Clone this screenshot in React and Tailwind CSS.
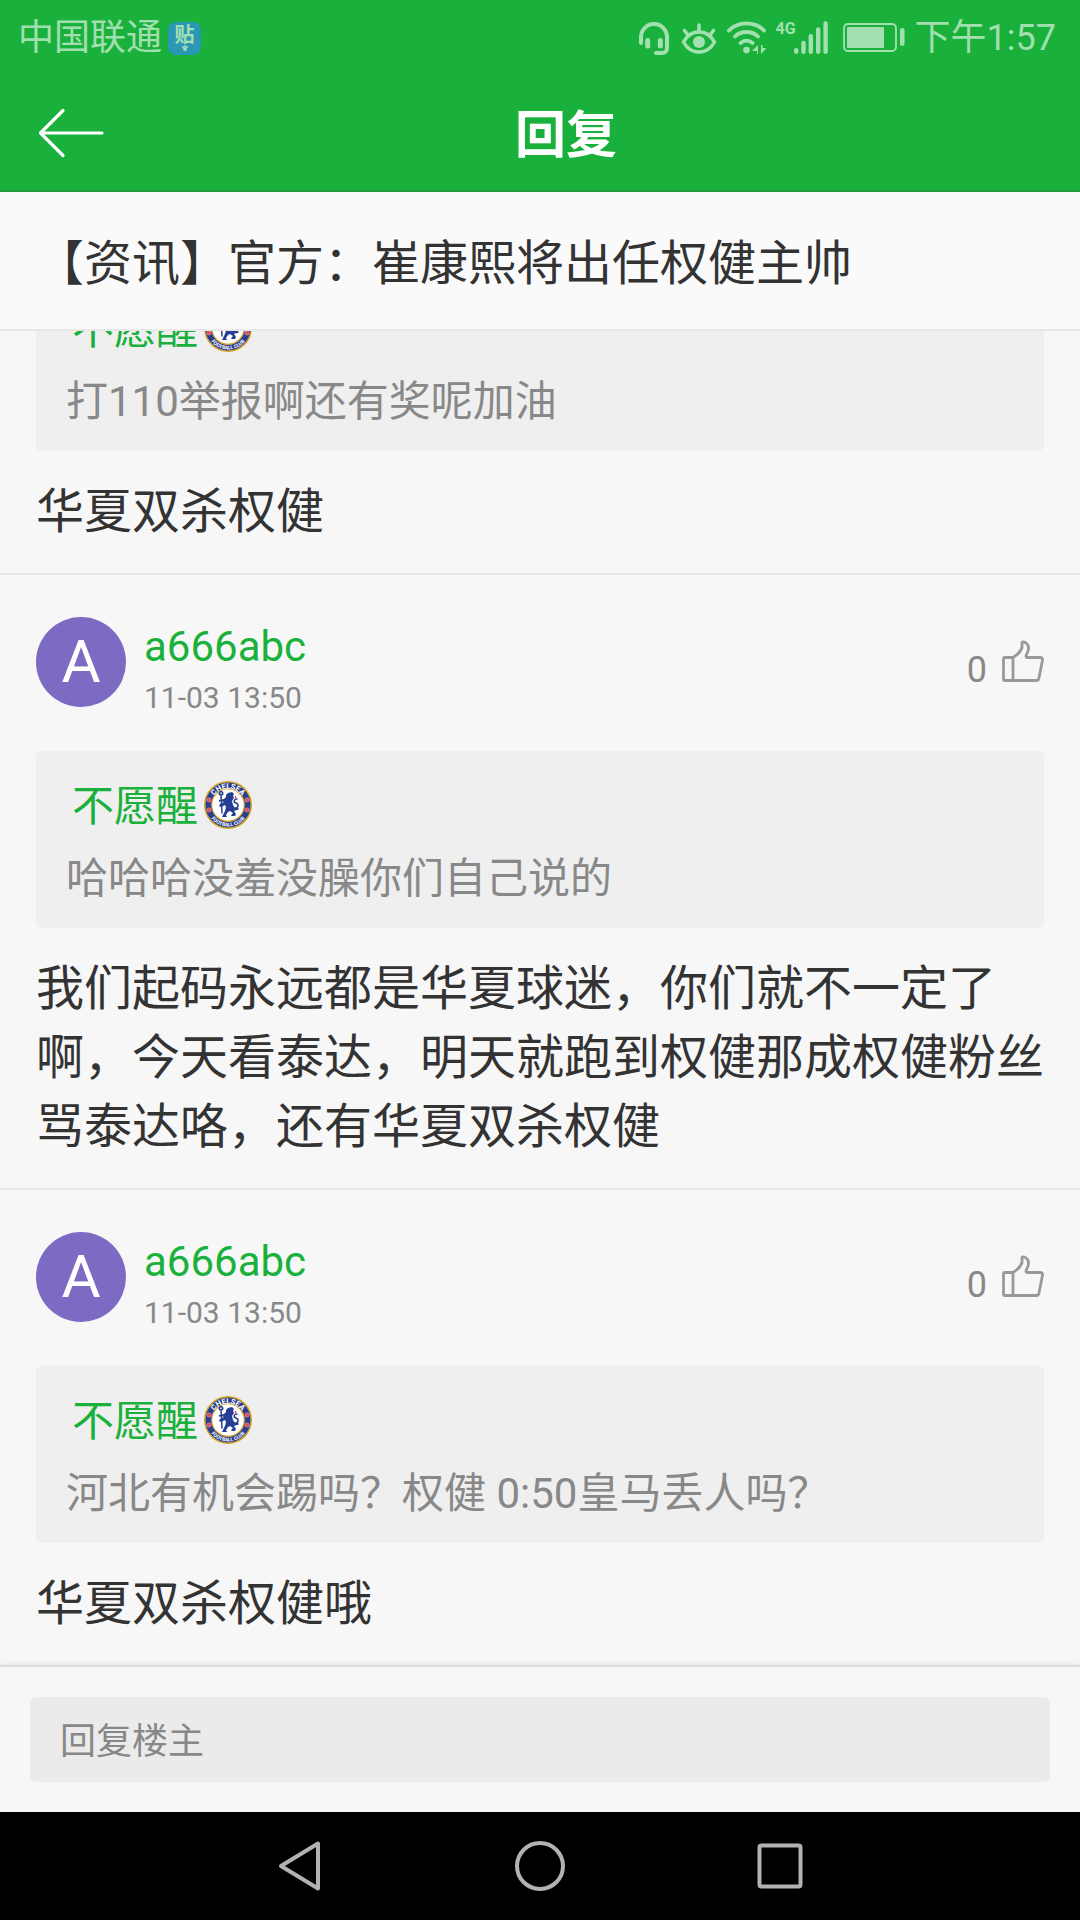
import React, { useState } from "react";

const comments = [
  {
    id: 1,
    user: "a666abc",
    time: "11-03 13:50",
    likes: 0,
    quoteUser: "不愿醒",
    quote: "打110举报啊还有奖呢加油",
    text: "华夏双杀权健",
  },
  {
    id: 2,
    user: "a666abc",
    time: "11-03 13:50",
    likes: 0,
    quoteUser: "不愿醒",
    quote: "哈哈哈没羞没臊你们自己说的",
    text: "我们起码永远都是华夏球迷，你们就不一定了啊，今天看泰达，明天就跑到权健那成权健粉丝骂泰达咯，还有华夏双杀权健",
  },
  {
    id: 3,
    user: "a666abc",
    time: "11-03 13:50",
    likes: 0,
    quoteUser: "不愿醒",
    quote: "河北有机会踢吗？权健 0:50皇马丢人吗？",
    text: "华夏双杀权健哦",
  },
];

function StatusBar() {
  return (
    <div className="flex h-[72px] items-center justify-between pl-[18px] pr-6 pt-1 text-4xl leading-[36px] text-white/60">
      <div className="flex items-center gap-[6px]">
        <span>中国联通</span>
        <span className="flex h-[33px] w-[33px] flex-col items-center rounded-lg bg-[#2a98b5] pt-[3px] text-xl font-bold leading-[20px] text-[#a3e0b1]">
          贴
          <svg width="6" height="6" viewBox="0 0 6 6" fill="currentColor">
            <circle cx="1" cy="2" r="1" />
            <circle cx="3" cy="1" r="1" />
            <circle cx="5" cy="2" r="1" />
            <circle cx="3" cy="4" r="2" />
          </svg>
        </span>
      </div>
      <div className="flex items-center">
        {/* headset */}
        <svg className="mr-3" width="30" height="33" viewBox="0 0 30 33" fill="none" stroke="currentColor" strokeLinecap="round">
          <path d="M2 21V15a13 13 0 0 1 26 0v11a5 5 0 0 1-5 5h-6" strokeWidth="4" />
          <path d="M8.7 18.5v5.5M21.3 18.5v5.5" strokeWidth="5" />
        </svg>
        {/* eye */}
        <svg className="mr-[10px]" width="36" height="33" viewBox="0 0 36 33" fill="none" stroke="currentColor" strokeLinecap="round">
          <path d="M2.500 20C10 6.500 26 6.500 33.500 20C26 33.500 10 33.500 2.500 20ZM18 3v6.500M3.500 8.500l3.500 4.500M32.500 8.500l-3.500 4.500" strokeWidth="3.600" />
          <circle cx="18" cy="20" r="6" fill="currentColor" stroke="none" />
        </svg>
        {/* wifi */}
        <svg className="mr-2" width="40" height="34" viewBox="0 0 40 34" fill="none" stroke="currentColor" strokeLinecap="round">
          <path d="M2 9.500C11 0 28 0 37 9.500M8 15.500c6-6 17-6 23 0M13.500 22c3.500-3 8.500-3 12 0" strokeWidth="3.800" />
          <circle cx="19.500" cy="29" r="3.300" fill="currentColor" stroke="none" />
          <path d="M31 24v9h-1v-3h-5zM34 24v9l5.500-6h-4v-3z" fill="currentColor" stroke="none" />
        </svg>
        <span className="-mr-0.5 h-[36px] text-base font-bold leading-[18px]">4G</span>
        {/* signal */}
        <svg className="mr-[15px]" width="34" height="34" viewBox="0 0 34 34" fill="none" stroke="currentColor" strokeWidth="4.400" strokeLinecap="round">
          <path d="M2.200 29.200v1.600M9.500 22v8.800M16.800 15.200v15.600M24.200 8.500v22.300M31.600 2.500v28.300" />
        </svg>
        {/* battery */}
        <svg className="mr-[10px]" width="62" height="30" viewBox="0 0 62 30">
          <rect x="1" y="1" width="52" height="27" rx="4" fill="none" stroke="currentColor" strokeWidth="1.800" />
          <rect x="4" y="4" width="37" height="21" rx="1" fill="currentColor" />
          <rect x="57" y="5" width="4.500" height="18" rx="2.200" fill="currentColor" />
        </svg>
        <span>下午1:57</span>
      </div>
    </div>
  );
}

function ClubBadge() {
  return (
    <svg width="48" height="48" viewBox="0 0 48 48" aria-label="Chelsea Football Club">
      <defs>
        <path id="badgeTop" d="M7.500 24a16.500 16.500 0 0 1 33 0" />
        <path id="badgeBottom" d="M2.500 24a21.500 21.500 0 0 0 43 0" />
      </defs>
      <circle cx="24" cy="24" r="23.200" fill="#263e94" stroke="#d5a42b" strokeWidth="1.500" />
      <circle cx="24" cy="24" r="16.300" fill="#fff" stroke="#d5a42b" strokeWidth="1.200" />
      <text fill="#fff" fontSize="7.500" fontWeight="700" textAnchor="middle">
        <textPath href="#badgeTop" startOffset="50%">CHELSEA</textPath>
      </text>
      <text fill="#fff" fontSize="5" fontWeight="700" textAnchor="middle">
        <textPath href="#badgeBottom" startOffset="50%">FOOTBALL CLUB</textPath>
      </text>
      <g fill="#ee4557" stroke="#f4a3a9" strokeWidth="0.600">
        <circle cx="5" cy="19" r="2.100" />
        <circle cx="5" cy="29" r="2.100" />
        <circle cx="43" cy="19" r="2.100" />
        <circle cx="43" cy="29" r="2.100" />
      </g>
      {/* lion with staff */}
      <path
        fill="#263e94"
        d="M22 14l2-2 4-1 2 2-1 2 1 2-2 3 1 4 2 3-1 3 2 3-1 2h-4l1-2 1-1-3-2-2 1-2 3 1 2h-5l1-2 2-4 1-4-1-2-4 2-2-1 1-2 4-2-3-1-2 1v-2l5-1 2-2z"
      />
      <path
        fill="none"
        stroke="#263e94"
        strokeWidth="1.500"
        strokeLinecap="round"
        d="M17 14l1 18M15.500 13.500a1.800 1.800 0 1 1 3 0zM30 27c5 1 5-4 2-5s-2-4 1-4M30 29l4-1"
      />
      <circle cx="31.500" cy="16" r="0.900" fill="#e5333f" />
    </svg>
  );
}

function LikeButton({ count }) {
  const [liked, setLiked] = useState(false);

  return (
    <button
      onClick={() => setLiked(!liked)}
      aria-label="赞"
      className="mt-[23px] flex items-baseline gap-[15px] text-4xl leading-[36px] text-[#888888]"
    >
      <span>{liked ? count + 1 : count}</span>
      <svg width="42" height="42" viewBox="0 0 42 42" fill="none" stroke="#999999" strokeWidth="2.800" strokeLinejoin="round" strokeLinecap="round">
        <path d="M3 17.500H11C15 15 19 11 20 7.500V3C20 1.500 22 1.500 24 3C28 6 27 10 24.500 14.500C23.500 16.500 24 17.500 26 17.500H38C40 17.500 40.800 18.500 40.500 20L37 38C36.700 39.700 36 40.500 34.500 40.500H3C2 40.500 1.500 40 1.500 39V19C1.500 18 2 17.500 3 17.500ZM11 17.500V40.500" />
      </svg>
    </button>
  );
}

function Comment({ item }) {
  return (
    <article className="shrink-0 border-b-2 border-[#e8e8e8] px-9 pb-[27px] pt-[42px] last:border-b-0">
      <header className="mb-[35px] flex items-start">
        <span className="flex h-[90px] w-[90px] items-center justify-center rounded-full bg-[#7d6ac3] text-6xl leading-none text-white">
          A
        </span>
        <div className="ml-[18px] flex-1 pt-[5px]">
          <h2 className="text-[42px] leading-[50px] text-[#19b13b]">{item.user}</h2>
          <time className="mt-2 block text-3xl leading-[36px] text-[#888888]">{item.time}</time>
        </div>
        <LikeButton count={item.likes} />
      </header>
      <blockquote className="rounded-md bg-[#efefef] px-[30px] pb-6 pt-7 text-[42px]">
        <div className="flex items-center gap-[6px] pl-[6px] leading-[48px] text-[#19b13b]">
          <span className="pt-1">{item.quoteUser}</span>
          <ClubBadge />
        </div>
        <p className="mt-[23px] leading-[50px] text-[#888888]">{item.quote}</p>
      </blockquote>
      <p className="mt-[26px] text-5xl leading-[69px] text-[#333333]">{item.text}</p>
    </article>
  );
}

export default function App() {
  const [reply, setReply] = useState("");

  return (
    <div lang="zh-CN" className="flex h-screen flex-col overflow-hidden bg-[#f7f7f7] font-[Roboto,'Noto_Sans_CJK_SC',sans-serif]">
      <div className="shrink-0 border-b-2 border-[#1f9a3a] bg-[#19b13b]">
        <StatusBar />
        <div className="flex h-[118px] items-center pt-[3px] text-white">
          <button aria-label="返回" className="w-[130px] pl-[38px]">
            <svg width="66" height="50" viewBox="0 0 66 50" fill="none" stroke="currentColor" strokeWidth="3.200" strokeLinecap="round" strokeLinejoin="round">
              <path d="M25 2.500L2.500 25L25 47.500M2.500 25H64" />
            </svg>
          </button>
          <h1 className="flex-1 pt-[6px] text-center text-[51px] font-bold leading-[60px]">回复</h1>
          <div className="w-[78px]" />
        </div>
      </div>

      <div className="shrink-0 border-b-2 border-[#e8e8e8] bg-[#fafafa] px-9 pb-[31px] pt-[37px] text-5xl leading-[69px] text-[#333333]">
        【资讯】官方：崔康熙将出任权健主帅
      </div>

      {/* newest replies stay in view, older ones slide under the title */}
      <main className="flex min-h-0 flex-1 flex-col justify-end overflow-hidden">
        {comments.map((item) => (
          <Comment key={item.id} item={item} />
        ))}
      </main>

      <form
        onSubmit={(e) => e.preventDefault()}
        className="shrink-0 border-t-2 border-[#dddddd] bg-[#f7f7f7] p-[30px] shadow-[0_-2px_5px_rgba(0,0,0,0.06)]"
      >
        <input
          type="text"
          name="reply"
          aria-label="回复楼主"
          placeholder="回复楼主"
          value={reply}
          onChange={(e) => setReply(e.target.value)}
          className="block h-[85px] w-full rounded-md bg-[#ebebeb] px-[30px] pt-1 text-4xl text-[#333333] outline-none placeholder:text-[#888888]"
        />
      </form>

      <nav className="flex h-[108px] shrink-0 items-center justify-center bg-black text-[#b2b2b2]">
        <button aria-label="后退" className="flex w-[240px] justify-center">
          <svg width="44" height="52" viewBox="0 0 44 52" fill="none" stroke="currentColor" strokeWidth="4" strokeLinejoin="round">
            <path d="M40 3.500V48.500L3 26Z" />
          </svg>
        </button>
        <button aria-label="主页" className="flex w-[240px] justify-center">
          <svg width="52" height="52" viewBox="0 0 52 52" fill="none" stroke="currentColor" strokeWidth="4">
            <circle cx="26" cy="26" r="23" />
          </svg>
        </button>
        <button aria-label="最近任务" className="flex w-[240px] justify-center">
          <svg width="46" height="46" viewBox="0 0 46 46" fill="none" stroke="currentColor" strokeWidth="4">
            <rect x="2.500" y="2.500" width="41" height="41" rx="2" />
          </svg>
        </button>
      </nav>
    </div>
  );
}
